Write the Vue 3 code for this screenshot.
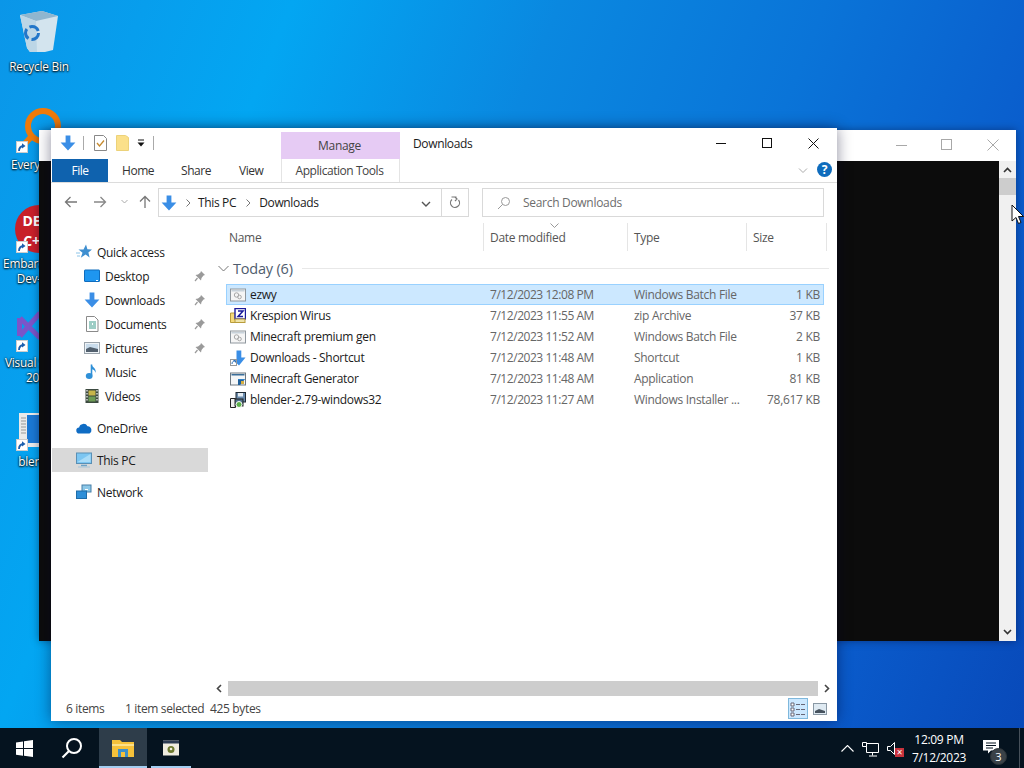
<script setup>
const nav = [
  { label: 'Quick access', icon: 'star', top: true },
  { label: 'Desktop', icon: 'desk', pin: true },
  { label: 'Downloads', icon: 'down', pin: true },
  { label: 'Documents', icon: 'doc', pin: true },
  { label: 'Pictures', icon: 'pic', pin: true },
  { label: 'Music', icon: 'music' },
  { label: 'Videos', icon: 'video' },
  { label: 'OneDrive', icon: 'cloud', top: true, gap: true },
  { label: 'This PC', icon: 'pc', top: true, gap: true, active: true },
  { label: 'Network', icon: 'net', top: true, gap: true }
]
const files = [
  { name: 'ezwy', date: '7/12/2023 12:08 PM', type: 'Windows Batch File', size: '1 KB', icon: 'bat', sel: true },
  { name: 'Krespion Wirus', date: '7/12/2023 11:55 AM', type: 'zip Archive', size: '37 KB', icon: 'zip' },
  { name: 'Minecraft premium gen', date: '7/12/2023 11:52 AM', type: 'Windows Batch File', size: '2 KB', icon: 'bat' },
  { name: 'Downloads - Shortcut', date: '7/12/2023 11:48 AM', type: 'Shortcut', size: '1 KB', icon: 'lnk' },
  { name: 'Minecraft Generator', date: '7/12/2023 11:48 AM', type: 'Application', size: '81 KB', icon: 'exe' },
  { name: 'blender-2.79-windows32', date: '7/12/2023 11:27 AM', type: 'Windows Installer ...', size: '78,617 KB', icon: 'msi' }
]
</script>

<template>
  <div class="desktop">
    <svg class="defs" width="0" height="0">
      <defs>
        <symbol id="down" viewBox="0 0 16 16"><path d="M5.600 0.500h4.800v7h5L8 15.500 0.600 7.500h5z" fill="#3a8ee6"/></symbol>
        <symbol id="star" viewBox="0 0 16 16"><path d="M10 0.500l1.400 4.800 4.600.2-3.600 3 1.200 5-4-2.900-4.800 3.200 1.700-5L2.500 5.500h5z" fill="#3f8fd0"/><path d="M0 9h4M1 12h3" stroke="#8cc4e8"/></symbol>
        <symbol id="desk" viewBox="0 0 16 16"><rect x="0.500" y="2" width="15" height="11.500" rx="0.500" fill="#1e96f0" stroke="#0f6cbd"/><path d="M12 12.500h2" stroke="#fff"/></symbol>
        <symbol id="doc" viewBox="0 0 16 16"><path d="M2.500 0.500h8l3.500 3.500v11.500h-11.500z" fill="#fff" stroke="#8a8a8a"/><path d="M5 6h7M5 8h3M9 8h3M5 10h7M5 12h7" stroke="#3a9a8a"/></symbol>
        <symbol id="pic" viewBox="0 0 16 16"><rect x="0.500" y="2.500" width="15" height="11" fill="#eef3f7" stroke="#9aa3ab"/><rect x="2" y="4" width="12" height="8" fill="#c9dcec"/><path d="M2 9l4-2 4 1 4 1v3H2z" fill="#52606e"/></symbol>
        <symbol id="music" viewBox="0 0 16 16"><path d="M7.500 0.500v11" stroke="#2f90d8" stroke-width="1.600"/><ellipse cx="5.200" cy="12" rx="3.400" ry="2.900" fill="#2f90d8"/><path d="M7.500 0.500c1 3 5 3.500 4 8.500-.5-3-2.500-3.500-4-4z" fill="#2f90d8"/></symbol>
        <symbol id="video" viewBox="0 0 16 16"><rect x="1.500" y="1" width="13" height="14" fill="#3c4a40"/><rect x="4.500" y="2.500" width="7" height="5" fill="#c7b54a"/><rect x="4.500" y="8.500" width="7" height="5" fill="#6d9b54"/><path d="M3 2v12M13 2v12" stroke="#ddd" stroke-dasharray="1.500 1.500" stroke-width="1.400"/></symbol>
        <symbol id="cloud" viewBox="0 0 16 16"><path d="M3.500 13.500a3 3 0 0 1-.4-6 4.500 4.500 0 0 1 8.400-1.200 3.600 3.600 0 0 1 3.900 3.500 3.500 3.500 0 0 1-1.900 3.700z" fill="#0f6cc4"/></symbol>
        <symbol id="pc" viewBox="0 0 16 16"><rect x="0.500" y="1" width="15" height="10.500" fill="#7cc6f2" stroke="#5a8fb4"/><path d="M1.500 10l13-8v8z" fill="#a9dcf8"/><path d="M5 13.500h6" stroke="#6ea3c7" stroke-width="1.500"/><path d="M2 15h12" stroke="#a5c4d8"/></symbol>
        <symbol id="net" viewBox="0 0 16 16"><rect x="6" y="1" width="9" height="7" fill="#8cc8e8" stroke="#477fa8"/><rect x="0.500" y="7" width="10" height="7.500" fill="#2f8fd8" stroke="#1f6ca8"/><path d="M9 5.500l3 0" stroke="#fff"/></symbol>
        <symbol id="bat" viewBox="0 0 16 16"><rect x="0.500" y="2" width="15" height="12" fill="#f5f5f5" stroke="#8f979e"/><rect x="1.500" y="3" width="13" height="1.500" fill="#c8d2da"/><circle cx="6.500" cy="8" r="2.200" fill="none" stroke="#a8a8a8"/><circle cx="9.500" cy="10" r="1.800" fill="none" stroke="#a8a8a8"/></symbol>
        <symbol id="zip" viewBox="0 0 16 16"><path d="M0.500 5h5l1-1.500h2v11h-8z" fill="#f5d97a" stroke="#b89c3c"/><rect x="5" y="0.500" width="10.500" height="10.500" fill="#fff" stroke="#1a1a9a" stroke-width="1.400"/><path d="M8 3h5L8 8.500h5" fill="none" stroke="#1a1a9a" stroke-width="1.500"/><rect x="5" y="11" width="10" height="3.500" fill="#efe3a8" stroke="#b89c3c"/></symbol>
        <symbol id="lnk" viewBox="0 0 16 16"><path d="M6.500 0.500h4.800v7h4.200L9 15.500 3 9.500h3.500z" fill="#3a8ee6"/><rect x="0.500" y="9.500" width="6" height="6" fill="#fff" stroke="#999"/><path d="M2 14c0-2 1-3 3-3M3.500 10.500h2v2" fill="none" stroke="#2a6fb8"/></symbol>
        <symbol id="exe" viewBox="0 0 16 16"><rect x="0.500" y="2" width="15" height="12" fill="#f4f6f7" stroke="#6e7880"/><rect x="1.500" y="3" width="13" height="1.500" fill="#3a6e9a"/><path d="M8 14V8h7.500L8 14z" fill="#2f7fc4"/><path d="M8 9h6l-2 3-2 2H8z" fill="#20609a"/><rect x="11" y="10" width="3" height="3" fill="#d8b040"/></symbol>
        <symbol id="msi" viewBox="0 0 16 16"><rect x="6" y="0.500" width="9.500" height="9.500" fill="#6b8cae" stroke="#1f2a34"/><rect x="8" y="1" width="5" height="3.500" fill="#e6eef4"/><path d="M0.500 6.500h5v9h-5z" fill="#f0f0f0" stroke="#222"/><rect x="5" y="7" width="8" height="7" fill="#4f6f8a" stroke="#222"/><circle cx="9" cy="12.500" r="3" fill="#5bb04a" stroke="#fff"/></symbol>
        <symbol id="pin" viewBox="0 0 12 12"><path d="M7 1l4 4-1.500.5L7.500 8 7 10.500 1.500 5 4 4.500 6.500 2.500z" fill="#9a9a9a"/><path d="M3.500 8L1 11" stroke="#9a9a9a" stroke-width="1.200"/></symbol>
        <symbol id="sc" viewBox="0 0 12 12"><rect x="0.500" y="0.500" width="11" height="11" fill="#fff" stroke="#ccc"/><path d="M3 10c0-3 1.500-4.800 4.500-5" fill="none" stroke="#1c5fae" stroke-width="1.800"/><path d="M6 2.200l3.500 2.800L6 7.500z" fill="#1c5fae"/></symbol>
      </defs>
    </svg>

    <!-- desktop icons -->
    <div class="dicon rb" style="top: 8px">
      <svg width="42" height="46" viewBox="0 0 42 46">
        <path d="M2 7L24 3l16 5-5 34-8 2H12L9 40z" fill="#d3e4ee"/>
        <path d="M2 7L24 3l16 5-22 5z" fill="#8fb6cf"/>
        <path d="M2 7l16 6 1 31h-7L9 40z" fill="#bcd6e6"/>
        <circle cx="14" cy="25" r="6.500" fill="none" stroke="#2276c9" stroke-width="3" stroke-dasharray="10.500 3.100"/>
      </svg>
      <span>Recycle Bin</span>
    </div>
    <div class="dicon" style="top: 106px">
      <svg width="48" height="48" viewBox="0 0 48 48" class="ev">
        <circle cx="28" cy="20" r="15" fill="none" stroke="#ee7a0a" stroke-width="6"/>
        <path d="M17 30L5 43" stroke="#ee7a0a" stroke-width="6"/>
      </svg>
      <svg class="sc" style="top: 35px; left: 15px" width="12" height="12"><use href="#sc"/></svg>
      <span>Everything</span>
    </div>
    <div class="dicon" style="top: 205px">
      <div class="dev"><b>DE</b><b>C+</b></div>
      <svg class="sc" style="top: 36px; left: 15px" width="12" height="12"><use href="#sc"/></svg>
      <span>Embarcadero Dev-C++</span>
    </div>
    <div class="dicon vs" style="top: 310px">
      <svg width="48" height="40" viewBox="0 0 48 40"><path d="M5 8L25 28M5 26L25 3M4.500 8v18" fill="none" stroke="#7b55c8" stroke-width="5"/></svg>
      <svg class="sc" style="top: 30px; left: 15px" width="12" height="12"><use href="#sc"/></svg>
      <span>Visual Studio 2019</span>
    </div>
    <div class="dicon bl" style="top: 412px">
      <svg width="48" height="36" viewBox="0 0 48 36"><rect x="4" y="1" width="24" height="34" fill="#eaeaea"/><path d="M6 6h5M6 9h5M6 12h5M6 15h5M6 18h5M6 21h5" stroke="#999"/><rect x="12" y="3" width="16" height="28" fill="#1a78d4"/></svg>
      <svg class="sc" style="top: 27px; left: 15px" width="12" height="12"><use href="#sc"/></svg>
      <span>blender</span>
    </div>

    <!-- window behind -->
    <div class="back">
      <div class="back-title">
        <svg class="c1" width="11" height="11" viewBox="0 0 11 11"><path d="M0 5.500h11" stroke="#a8a8a8"/></svg>
        <svg class="c2" width="11" height="11" viewBox="0 0 11 11"><rect x=".5" y=".5" width="10" height="10" fill="none" stroke="#a8a8a8"/></svg>
        <svg class="c3" width="12" height="12" viewBox="0 0 12 12"><path d="M.5.500l11 11M11.500.500l-11 11" stroke="#a8a8a8"/></svg>
      </div>
      <div class="back-body">
        <div class="console"></div>
        <div class="bscroll">
          <svg width="9" height="6" viewBox="0 0 9 6"><path d="M1 5l3.500-3.500L8 5" fill="none" stroke="#333" stroke-width="1.600"/></svg>
          <div class="bthumb"></div>
          <div class="bspace"></div>
          <svg width="9" height="6" viewBox="0 0 9 6"><path d="M1 1l3.500 3.500L8 1" fill="none" stroke="#333" stroke-width="1.600"/></svg>
        </div>
      </div>
    </div>

    <!-- explorer -->
    <div class="win">
      <div class="titlebar">
        <div class="qat">
          <svg width="16" height="16"><use href="#down"/></svg>
          <i class="sep"></i>
          <svg class="q2" width="13" height="16" viewBox="0 0 13 16"><path d="M.5.500h9l3 3v12H.5z" fill="#fff" stroke="#888"/><path d="M3 8l2.500 3L10 5.500" fill="none" stroke="#c68a2e" stroke-width="1.300"/></svg>
          <svg class="q3" width="13" height="16" viewBox="0 0 13 16"><path d="M.5.500h9l3 2v13H.5z" fill="#fbe08a" stroke="#ecd27a"/></svg>
          <svg class="q4" width="8" height="8" viewBox="0 0 8 8"><path d="M1 1h6" stroke="#111"/><path d="M0.500 3.500h7L4 7.500z" fill="#111"/></svg>
          <i class="sep s2"></i>
        </div>
        <div class="manage">Manage</div>
        <div class="wtitle">Downloads</div>
        <div class="ctrls">
          <svg width="10" height="10" viewBox="0 0 10 10"><path d="M0 5.500h10" stroke="#111"/></svg>
          <svg width="10" height="10" viewBox="0 0 10 10"><rect x=".5" y=".5" width="9" height="9" fill="none" stroke="#111"/></svg>
          <svg width="11" height="11" viewBox="0 0 11 11"><path d="M.5.500l10 10M10.500.500l-10 10" stroke="#111"/></svg>
        </div>
      </div>

      <div class="tabs">
        <div class="tab file">File</div>
        <div class="tab home">Home</div>
        <div class="tab share">Share</div>
        <div class="tab view">View</div>
        <div class="tab apptools">Application Tools</div>
        <svg class="ribchev" width="10" height="6" viewBox="0 0 10 6"><path d="M1 .500l4 4 4-4" fill="none" stroke="#aaa"/></svg>
        <div class="help">?</div>
      </div>

      <div class="addr">
        <div class="navbtns">
          <svg width="14" height="12" viewBox="0 0 14 12"><path d="M13 6H1.500M6.500 1l-5 5 5 5" fill="none" stroke="#777" stroke-width="1.300"/></svg>
          <svg width="14" height="12" viewBox="0 0 14 12"><path d="M1 6h11.500M7.500 1l5 5-5 5" fill="none" stroke="#888" stroke-width="1.300"/></svg>
          <svg width="7" height="5" viewBox="0 0 7 5"><path d="M.5 1l3 3 3-3" fill="none" stroke="#aaa"/></svg>
          <svg width="12" height="14" viewBox="0 0 12 14"><path d="M6 13V1.500M1 6.500l5-5 5 5" fill="none" stroke="#777" stroke-width="1.300"/></svg>
        </div>
        <div class="crumb">
          <svg width="16" height="16"><use href="#down"/></svg>
          <svg class="gt" width="5" height="8" viewBox="0 0 5 8"><path d="M.5.500l3.500 3.500L.5 7.500" fill="none" stroke="#777"/></svg>
          <span>This PC</span>
          <svg class="gt gt2" width="5" height="8" viewBox="0 0 5 8"><path d="M.5.500l3.500 3.500L.5 7.500" fill="none" stroke="#777"/></svg>
          <span>Downloads</span>
          <svg class="cdrop" width="10" height="6" viewBox="0 0 10 6"><path d="M1 1l4 4 4-4" fill="none" stroke="#555" stroke-width="1.400"/></svg>
          <div class="refresh">
            <svg width="12" height="13" viewBox="0 0 12 13"><path d="M3 3.500A4.500 4.500 0 1 0 9.500 4M2.500 1h5v0M6 1l2 2-2 2" fill="none" stroke="#777" stroke-width="1.200"/></svg>
          </div>
        </div>
        <div class="search">
          <svg width="14" height="14" viewBox="0 0 14 14"><circle cx="8.500" cy="5.500" r="4" fill="none" stroke="#999"/><path d="M5.500 8.500L1 13" stroke="#999"/></svg>
          <span>Search Downloads</span>
        </div>
      </div>

      <div class="body">
        <aside class="nav">
          <div v-for="n in nav" :key="n.label" class="nrow" :class="{ top: n.top, gap: n.gap, active: n.active }">
            <svg width="16" height="16" class="nicon"><use :href="'#' + n.icon"/></svg>
            <span>{{ n.label }}</span>
            <svg v-if="n.pin" class="pin" width="12" height="12"><use href="#pin"/></svg>
          </div>
        </aside>
        <section class="list">
          <div class="lhead">
            <div class="h hn">Name</div>
            <div class="h hd">Date modified
              <svg class="sort" width="9" height="5" viewBox="0 0 9 5"><path d="M.5.500l4 4 4-4" fill="none" stroke="#999"/></svg>
            </div>
            <div class="h ht">Type</div>
            <div class="h hs">Size</div>
          </div>
          <div class="group">
            <svg width="11" height="7" viewBox="0 0 11 7"><path d="M.5 1l5 5 5-5" fill="none" stroke="#777"/></svg>
            <span>Today (6)</span>
            <i></i>
          </div>
          <div v-for="f in files" :key="f.name" class="row" :class="{ sel: f.sel }">
            <div class="fname"><svg width="16" height="16"><use :href="'#' + f.icon"/></svg><span>{{ f.name }}</span></div>
            <div class="meta date">{{ f.date }}</div>
            <div class="meta">{{ f.type }}</div>
            <div class="meta right">{{ f.size }}</div>
          </div>
        </section>
      </div>

      <div class="hscroll">
        <svg width="6" height="9" viewBox="0 0 6 9"><path d="M5 1L1.500 4.500 5 8" fill="none" stroke="#444" stroke-width="1.600"/></svg>
        <div class="hthumb"></div>
        <svg width="6" height="9" viewBox="0 0 6 9"><path d="M1 1l3.500 3.500L1 8" fill="none" stroke="#444" stroke-width="1.600"/></svg>
      </div>

      <div class="status">
        <span class="st1">6 items</span>
        <span class="st2">1 item selected</span>
        <span class="st3">425 bytes</span>
        <div class="viewbtns">
          <div class="vb on">
            <svg width="16" height="16" viewBox="0 0 16 16"><path d="M1 2h3v3H1zM1 7h3v3H1zM1 12h3v3H1z" fill="#fff" stroke="#667"/><path d="M6 3.500h4M11 3.500h4M6 8.500h4M11 8.500h4M6 13.500h4M11 13.500h4" stroke="#667"/></svg>
          </div>
          <div class="vb">
            <svg width="14" height="12" viewBox="0 0 14 12"><rect x=".5" y=".5" width="13" height="11" fill="#dfeaf2" stroke="#8a98a4"/><path d="M2 8l4-2 6 2v2H2z" fill="#46525e"/></svg>
          </div>
        </div>
      </div>
    </div>

    <!-- cursor -->
    <svg class="cursor" width="13" height="21" viewBox="0 0 13 21"><path d="M1 1v16l4-3.500 2.500 6 2.500-1-2.500-6H12.500z" fill="#fff" stroke="#111"/></svg>

    <!-- taskbar -->
    <footer class="taskbar">
      <div class="tb start">
        <svg width="17" height="17" viewBox="0 0 17 17"><path d="M0 2.400l7-1v6.700H0zM8 1.300L17 0v8.100H8zM0 9h7v6.700l-7-1zM8 9h9v8l-9-1.300z" fill="#fff"/></svg>
      </div>
      <div class="tb">
        <svg width="22" height="22" viewBox="0 0 22 22"><circle cx="13" cy="9" r="7" fill="none" stroke="#fff" stroke-width="2"/><path d="M8 14l-6.500 6.500" stroke="#fff" stroke-width="2.200"/></svg>
      </div>
      <div class="tb tbactive">
        <svg width="22" height="20" viewBox="0 0 22 20"><path d="M0 2h8l2 2h12v15H0z" fill="#f5c13a"/><path d="M0 6h22v2H0z" fill="#fbe08a"/><rect x="6" y="11" width="10" height="8" fill="#3d8fc8"/><rect x="9" y="14" width="4" height="5" fill="#f5c13a"/></svg>
      </div>
      <div class="tb tbopen">
        <svg width="16" height="16" viewBox="0 0 16 16"><rect width="16" height="15" y="0.500" fill="#f0ecdf"/><rect width="16" height="3" y="0.500" fill="#2c3b52"/><circle cx="8" cy="9.500" r="3.500" fill="#6e7a2e"/><circle cx="8" cy="9" r="1.300" fill="#f0ecdf"/></svg>
      </div>
      <div class="tray">
        <svg class="t1" width="13" height="7" viewBox="0 0 13 7"><path d="M.5 6.500l6-6 6 6" fill="none" stroke="#fff" stroke-width="1.100"/></svg>
        <svg class="t2" width="17" height="15" viewBox="0 0 17 15"><path d="M4.500 1.500h12v9h-12zM10.500 10.500v3M7 14h8" fill="none" stroke="#fff"/><path d="M.5 .5h4v4h-4z" fill="#05131f" stroke="#fff"/></svg>
        <div class="t3">
          <svg width="18" height="16" viewBox="0 0 18 16"><path d="M.5 5.500h3l4-4v12l-4-4h-3z" fill="none" stroke="#fff"/></svg>
          <i>×</i>
        </div>
        <div class="clock"><div>12:09 PM</div><div>7/12/2023</div></div>
        <div class="notif">
          <svg width="16" height="14" viewBox="0 0 16 14"><path d="M0 0h16v10.500H8l-3 3v-3H0z" fill="#fff"/><path d="M3 3h10M3 5.500h10M3 8h7" stroke="#04121f"/></svg>
          <b>3</b>
        </div>
        <i class="peek"></i>
      </div>
    </footer>
  </div>
</template>

<style>
html, body { margin: 0; padding: 0; }
</style>

<style scoped>
* { box-sizing: border-box; }
.desktop {
  position: relative; width: 1024px; height: 768px; overflow: hidden;
  font-family: "Open Sans", "Noto Sans", sans-serif; font-size: 12px; color: #1b1b1b;
  background:
    linear-gradient(112deg, #0b96e8 0%, #03a6f2 22%, #0a88e0 42%, #0a74d8 62%, #0a5ccc 82%, #0848b8 100%);
}
.defs { position: absolute; }
.dicon {
  position: absolute; left: 1px; width: 76px; display: flex; flex-direction: column; align-items: center;
  color: #fff; text-align: center; line-height: 15px; font-size: 11.800px; letter-spacing: -0.2px;
  text-shadow: 0 1px 2px #000, 0 0 2px #000;
}
.dicon > svg:first-child { margin-bottom: 3px; }
.dicon.rb > svg:first-child { margin-bottom: 5px; }
.dicon.vs > svg:first-child { margin-bottom: 5px; }
.dicon.bl > svg:first-child { margin-bottom: 6px; }
.sc { position: absolute; }
.dev {
  width: 48px; height: 48px; border-radius: 50%; background: #c8202a; margin-bottom: 3px;
  display: flex; flex-direction: column; align-items: center; justify-content: center;
  font-size: 14px; line-height: 20px; text-shadow: none; padding: 4px 15px 0 0; flex: none;
}
.back {
  position: absolute; left: 39px; top: 130px; width: 977px; height: 511px;
  background: #fff; display: flex; flex-direction: column; box-shadow: 0 0 8px rgba(0,0,30,.4);
}
.back-title { height: 31px; display: flex; align-items: center; position: relative; }
.back-title svg { position: absolute; }
.c1 { left: 857px; top: 10px; } .c2 { left: 902px; top: 9px; } .c3 { left: 948px; top: 9px; }
.back-body { flex: 1; display: flex; }
.console { flex: 1; background: #0c0c0c; }
.bscroll { width: 17px; background: #f0f0f0; display: flex; flex-direction: column; align-items: center; padding: 6px 0; }
.bthumb { width: 17px; height: 17px; margin-top: 5px; background: #cdcdcd; }
.bspace { flex: 1; }
.win {
  position: absolute; left: 51px; top: 128px; width: 786px; height: 593px;
  background: #fff; display: flex; flex-direction: column; box-shadow: 0 0 14px rgba(0,0,40,.45);
}
.titlebar { height: 31px; position: relative; display: flex; }
.qat { display: flex; align-items: center; padding: 0 0 0 9px; height: 30px; }
.sep { width: 1px; height: 14px; background: #aaa; margin-left: 7px; }
.q2 { margin-left: 10px; } .q3 { margin-left: 9px; } .q4 { margin-left: 8px; }
.s2 { margin-left: 8px; }
.manage {
  position: absolute; left: 230px; top: 4px; width: 119px; height: 27px; background: #e6cbf4;
  display: flex; align-items: center; justify-content: center; color: #444; font-size: 12px; letter-spacing: -.3px;
  padding-right: 2px;
}
.wtitle { position: absolute; left: 362px; top: 7px; line-height: 18px; letter-spacing: -.35px; }
.ctrls { position: absolute; right: 18px; top: 10px; display: flex; gap: 36px; }
.tabs { height: 24px; border-bottom: 1px solid #dcdcdc; position: relative; padding-left: 1px; }
.tab { position: absolute; top: 0; height: 23px; display: flex; align-items: center; color: #333; letter-spacing: -.45px; }
.file { left: 1px; width: 56px; justify-content: center; background: #0f62ae; color: #fff; }
.home { left: 71px; } .share { left: 130px; } .view { left: 188px; }
.apptools { left: 230px; width: 119px; justify-content: center; border-left: 1px solid #e4e4e4; border-right: 1px solid #e4e4e4; height: 23px; background: #fff; color: #444; padding-right: 2px; }
.ribchev { position: absolute; right: 29px; top: 9px; }
.help {
  position: absolute; right: 5px; top: 3px; width: 15px; height: 15px; border-radius: 50%;
  background: #0f6cbd; color: #fff; font: bold 12px/15px "Open Sans", sans-serif; text-align: center;
}
.addr { height: 41px; display: flex; align-items: flex-start; padding-top: 5px; }
.navbtns { width: 107px; position: relative; height: 16px; flex: none; margin-top: 6px; }
.navbtns svg { position: absolute; top: 2px; }
.navbtns svg:nth-child(1) { left: 13px; } .navbtns svg:nth-child(2) { left: 42px; }
.navbtns svg:nth-child(3) { left: 70px; top: 5px; } .navbtns svg:nth-child(4) { left: 88px; top: 1px; }
.crumb {
  width: 311px; height: 29px; border: 1px solid #d9d9d9; display: flex; align-items: center; padding-left: 2px;
  position: relative; flex: none; letter-spacing: -.35px;
}
.gt { margin: 0 7px 0 9px; }
.gt2 { margin: 0 8px 0 10px; }
.cdrop { position: absolute; right: 37px; top: 12px; }
.refresh {
  position: absolute; right: 0; top: 0; bottom: 0; width: 27px; border-left: 1px solid #d9d9d9;
  display: flex; align-items: center; justify-content: center;
}
.search {
  margin-left: 13px; width: 342px; height: 29px; border: 1px solid #d9d9d9; display: flex; align-items: center;
  padding-left: 14px; gap: 12px; color: #6d6d6d; letter-spacing: -.3px; flex: none;
}
.body { flex: 1; display: flex; min-height: 0; }
.nav { width: 157px; padding: 16px 0 0 1px; flex: none; }
.nrow { height: 24px; display: flex; align-items: center; padding-left: 32px; position: relative; letter-spacing: -.3px; }
.nrow.top { padding-left: 24px; }
.nrow.gap { margin-top: 8px; }
.nicon { margin-right: 5px; flex: none; }
.nrow.active { background: #d9d9d9; }
.pin { position: absolute; left: 142px; top: 6px; }
.list { margin-left: 5px; flex: 1; min-width: 0; }
.lhead { height: 28px; display: flex; margin-top: -1px; color: #555; letter-spacing: -.3px; }
.h { height: 28px; display: flex; align-items: center; padding-left: 6px; border-right: 1px solid #e5e5e5; position: relative; }
.hn { width: 271px; padding-left: 16px; } .hd { width: 144px; } .ht { width: 119px; } .hs { width: 80px; }
.sort { position: absolute; left: 66px; top: 0; }
.group { height: 33px; padding-top: 2px; display: flex; align-items: center; padding-left: 5px; color: #4f5d6e; font-size: 14.500px; letter-spacing: -.2px; }
.group span { margin-left: 4px; }
.group i { flex: 1; height: 1px; background: #e8e8e8; margin: 0 8px 0 9px; }
.row {
  margin-left: 13px; width: 598px; height: 21px; display: grid; grid-template-columns: 263px 144px 114px 1fr;
  align-items: center; border: 1px solid transparent; letter-spacing: -.3px;
}
.row.sel { background: #cce8ff; border-color: #99d1ff; }
.fname { display: flex; align-items: center; gap: 4px; padding-left: 3px; }
.meta { color: #666; white-space: nowrap; }
.date { letter-spacing: -.45px; }
.right { text-align: right; padding-right: 3px; }
.hscroll { height: 15px; display: flex; align-items: center; margin-left: 163px; margin-right: 5px; padding: 0 2px; }
.hthumb { flex: 1; height: 15px; background: #cdcdcd; margin: 0 6px; }
.status { height: 25px; position: relative; display: flex; align-items: center; color: #444; letter-spacing: -.35px; }
.st1 { position: absolute; left: 15px; } .st2 { position: absolute; left: 74px; } .st3 { position: absolute; left: 159px; }
.viewbtns { position: absolute; right: 7px; top: 2px; display: flex; gap: 2px; }
.vb { width: 20px; height: 21px; display: flex; align-items: center; justify-content: center; }
.vb.on { background: #cce8ff; border: 1px solid #7fb8dc; }
.cursor { position: absolute; left: 1011px; top: 204px; }
.taskbar { position: absolute; left: 0; right: 0; bottom: 0; height: 40px; background: #05131f; display: flex; color: #fff; }
.tb { width: 48px; height: 40px; display: flex; align-items: center; justify-content: center; position: relative; }
.tbactive { margin-left: 3px; background: #2e3d4a; }
.tbactive::after, .tbopen::after { content: ""; position: absolute; bottom: 0; height: 2px; background: #a3cdf0; }
.tbactive::after { left: 0; right: 0; }
.tbopen::after { left: 4px; right: 4px; }
.tray { flex: 1; position: relative; }
.tray > * { position: absolute; }
.t1 { left: 646px; top: 17px; }
.t2 { left: 667px; top: 14px; }
.t3 { left: 692px; top: 13px; width: 24px; height: 20px; }
.t3 i {
  position: absolute; left: 8px; top: 7px; width: 9px; height: 9px; background: #c8323c; color: #fff; font: 10px/9px "Open Sans", sans-serif;
  text-align: center; font-style: normal;
}
.clock { left: 702px; width: 84px; top: 3px; text-align: center; line-height: 18px; font-size: 12px; letter-spacing: -.3px; }
.notif { left: 788px; top: 12px; width: 30px; height: 26px; }
.notif svg { position: absolute; left: 0; top: 0; }
.notif b {
  position: absolute; left: 7px; top: 8px; width: 17px; height: 17px; border-radius: 50%; background: #3a4248;
  font: 11px/15px "Open Sans", sans-serif; text-align: center; border: 1px solid #2c3338;
}
.peek { left: 824px; top: 0; width: 1px; height: 40px; background: #46505a; }
</style>
